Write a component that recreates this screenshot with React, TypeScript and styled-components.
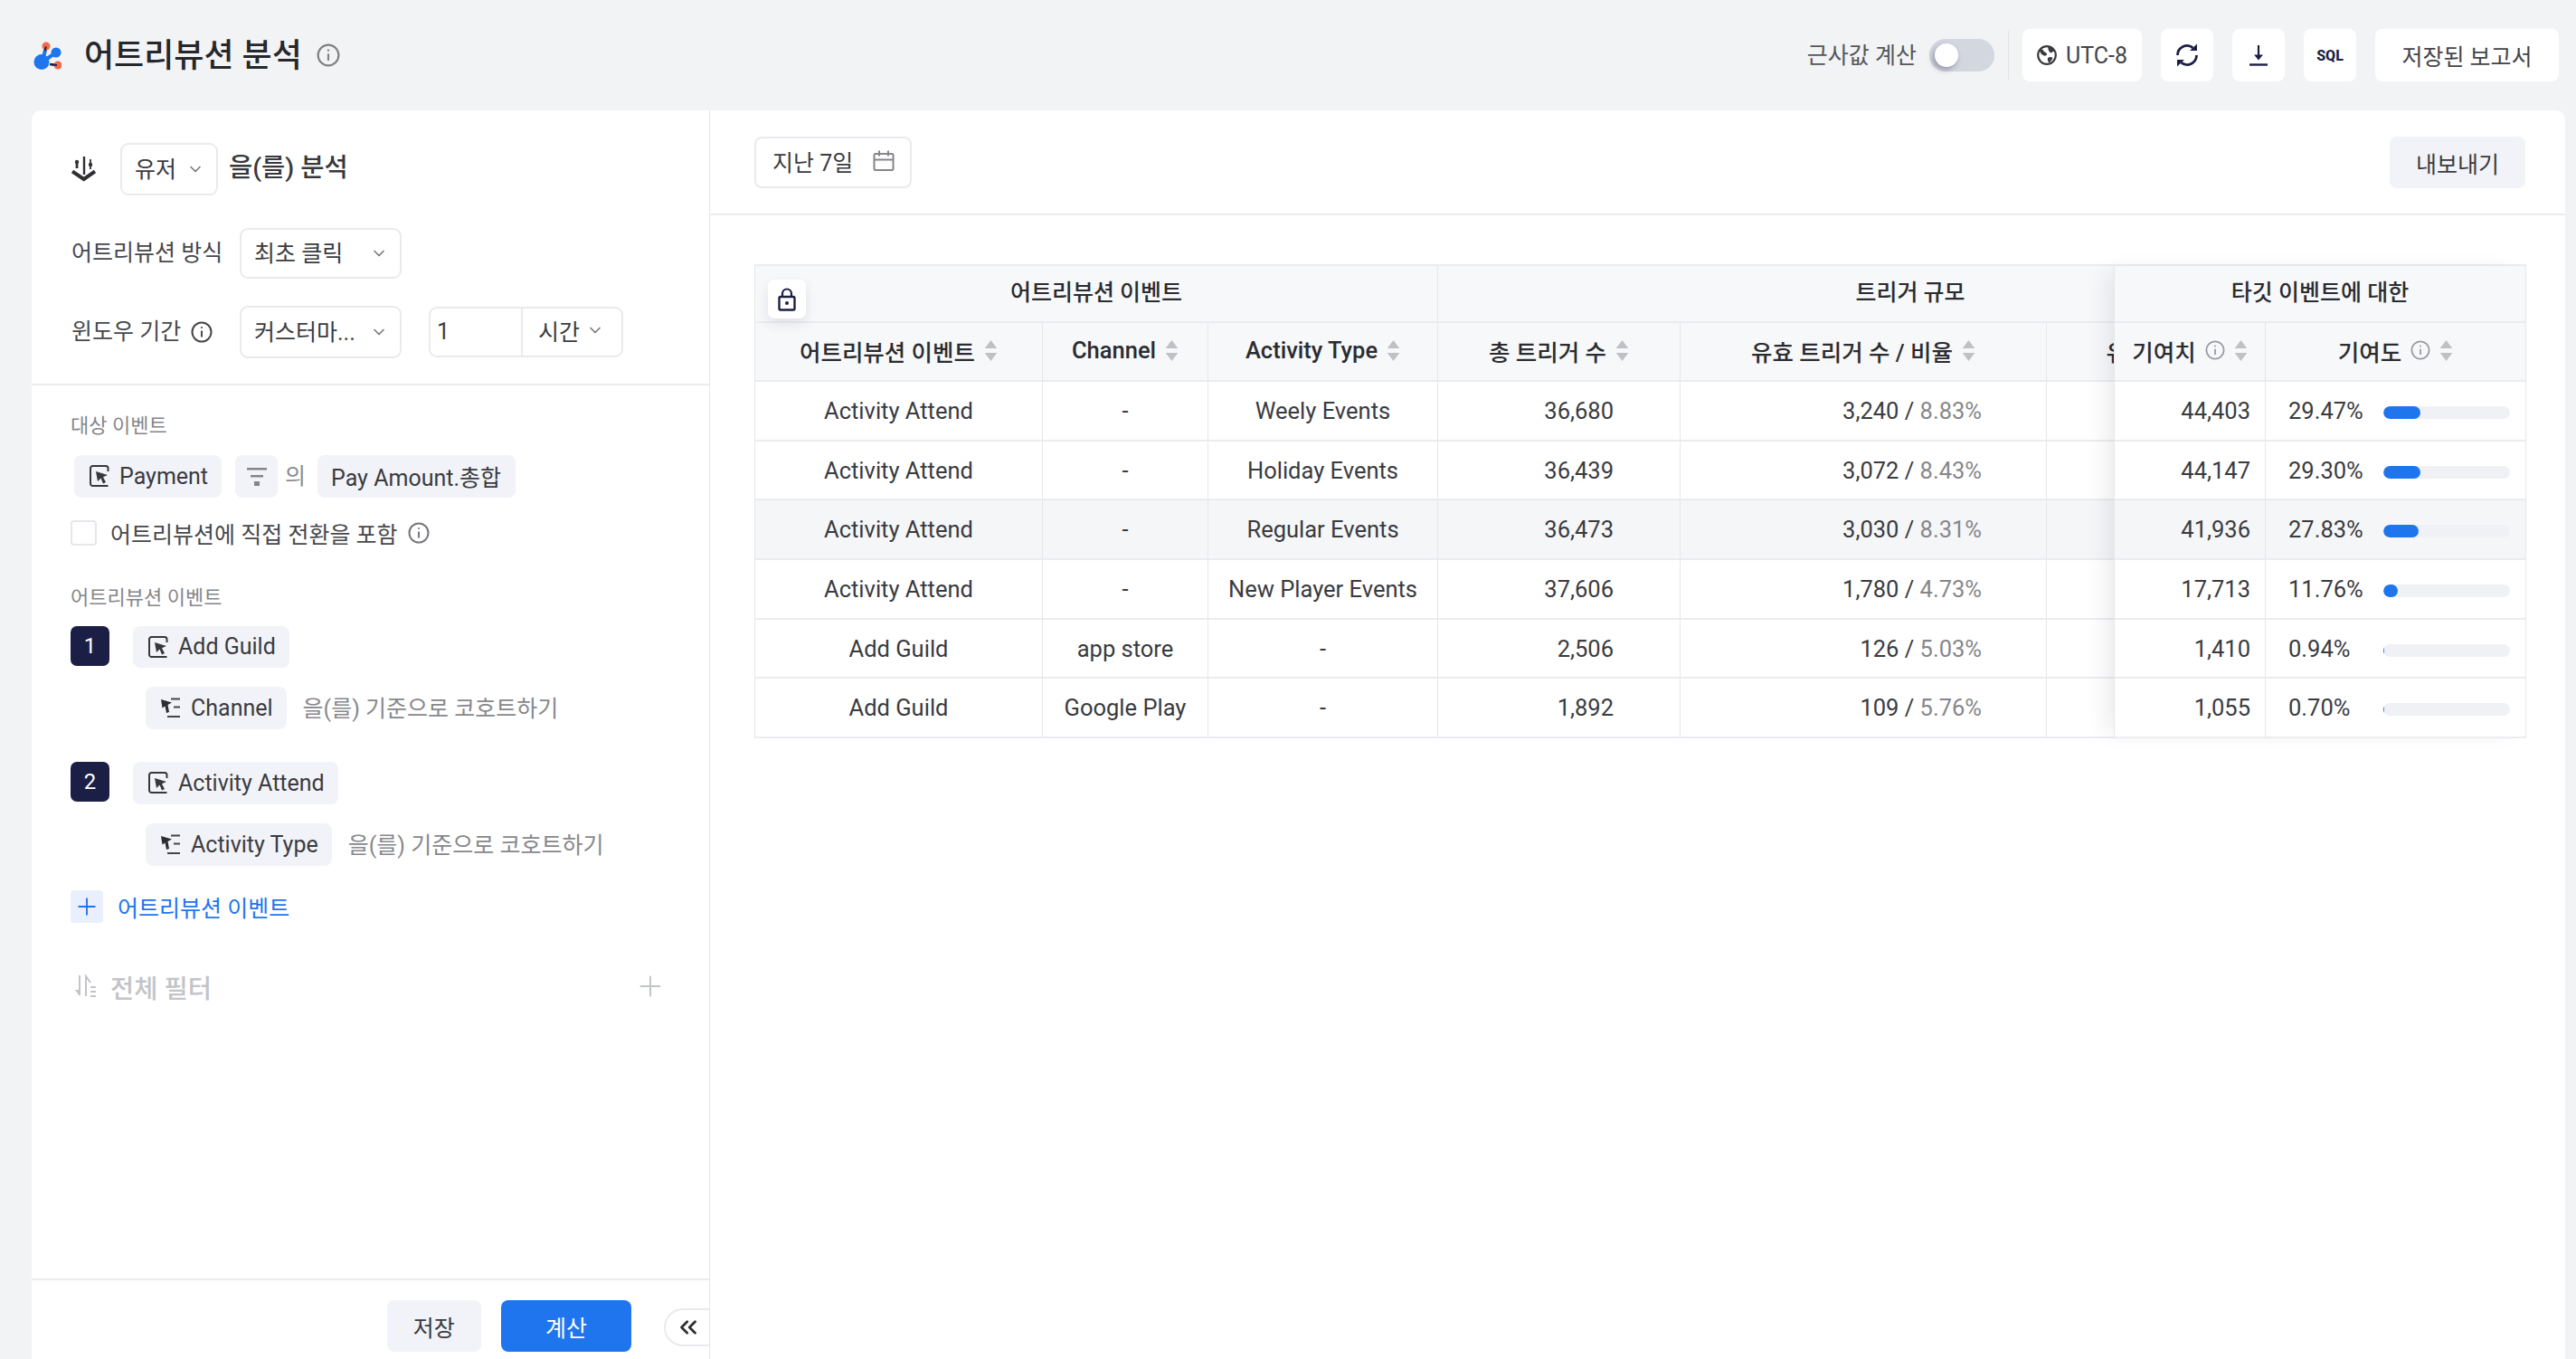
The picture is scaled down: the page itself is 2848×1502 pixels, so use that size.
import React from "react";
import styled, { createGlobalStyle } from "styled-components";
import { ChevronDown, ChevronsLeft, Plus } from "lucide-react";

const GlobalStyle = createGlobalStyle`
  html, body { margin: 0; padding: 0; background: #f2f3f5; }
  body { font-family: Roboto, "Noto Sans CJK KR", sans-serif; color: #2f3033; }
  * { box-sizing: border-box; }
`;

const Page = styled.div`
  width: 2848px;
  height: 1502px;
  display: flex;
  flex-direction: column;
  overflow: hidden;
  background: #f2f3f5;
`;

const TopBar = styled.header`
  height: 122px;
  flex: none;
  display: flex;
  align-items: center;
  padding: 0 19px 0 37px;
`;

const Title = styled.h1`
  margin: 2px 0 0 25px;
  font-size: 36px;
  line-height: 48px;
  font-weight: 500;
  color: #26272b;
`;

const TitleInfo = styled.span`
  display: flex;
  margin-left: 16px;
  color: #808184;
`;

const TopActions = styled.div`
  margin-left: auto;
  display: flex;
  align-items: center;
  gap: 21px;
`;

const ApproxLabel = styled.span`
  font-size: 25px;
  color: #55565a;
  position: relative;
  top: -2px;
`;

const Toggle = styled.div`
  width: 72px;
  height: 36px;
  border-radius: 18px;
  background: #d3d7e0;
  margin-left: -7px;
  position: relative;
`;

const ToggleKnob = styled.span`
  position: absolute;
  left: 6px;
  top: 5px;
  width: 26px;
  height: 26px;
  border-radius: 50%;
  background: #fff;
  box-shadow: -2px 3px 6px rgba(30, 32, 60, 0.35);
`;

const VLine = styled.span`
  width: 1px;
  height: 54px;
  background: #e1e2e6;
  margin: 0 -6px 0 -6px;
`;

const TopButton = styled.button<{ $w: number }>`
  width: ${(p) => p.$w}px;
  height: 58px;
  border: 0;
  border-radius: 8px;
  background: #fff;
  display: flex;
  align-items: center;
  justify-content: center;
  gap: 10px;
  padding: 0;
  font: inherit;
  font-size: 25px;
  color: #44454a;
`;

const SqlText = styled.span`
  font-size: 16px;
  font-weight: 800;
  color: #1c1f45;
`;

const Body = styled.main`
  flex: 1;
  display: flex;
  padding: 0 12px 0 35px;
  min-height: 0;
`;

const SidePanel = styled.aside`
  width: 750px;
  flex: none;
  background: #fff;
  border-right: 1px solid #e6e7eb;
  border-top-left-radius: 10px;
  display: flex;
  flex-direction: column;
`;

const SideTop = styled.section`
  padding: 36px 43px 28px 44px;
  border-bottom: 2px solid #ebecef;
`;

const AnalyzeRow = styled.div`
  display: flex;
  align-items: center;
  height: 58px;
`;

const AnalyzeText = styled.span`
  margin-left: 12px;
  font-size: 28.5px;
  font-weight: 500;
  color: #37383c;
  position: relative;
  top: -5px;
`;

const SettingRow = styled.div<{ $mt: number }>`
  display: flex;
  align-items: center;
  margin-top: ${(p) => p.$mt}px;
`;

const SettingLabel = styled.span`
  width: 186px;
  flex: none;
  display: flex;
  align-items: center;
  gap: 11px;
  font-size: 25px;
  line-height: 34px;
  color: #47484c;
`;

const Select = styled.div<{ $w: number; $h?: number }>`
  width: ${(p) => p.$w}px;
  height: ${(p) => p.$h ?? 58}px;
  flex: none;
  display: flex;
  align-items: center;
  justify-content: space-between;
  padding: 0 13px 5px 14px;
  border: 2px solid #e9eaee;
  border-radius: 9px;
  background: #fff;
  font-size: 25px;
  color: #3b3c40;
  white-space: nowrap;
  svg { color: #77787c; flex: none; position: relative; top: 2px; }
`;

const NumberGroup = styled.div`
  margin-left: 30px;
  width: 215px;
  height: 56px;
  display: flex;
  border: 2px solid #e9eaee;
  border-radius: 9px;
  font-size: 25px;
  color: #3b3c40;
`;

const NumberValue = styled.span`
  width: 102px;
  display: flex;
  align-items: center;
  padding: 0 0 2px 7px;
  border-right: 2px solid #e9eaee;
`;

const NumberUnit = styled.span`
  flex: 1;
  display: flex;
  align-items: center;
  justify-content: space-between;
  padding: 0 19px 4px 17px;
  svg { color: #77787c; }
`;

const SideMiddle = styled.section`
  padding: 30px 43px 0 43px;
  flex: 1;
`;

const Caption = styled.div<{ $mt?: number }>`
  font-size: 22px;
  line-height: 30px;
  color: #85868a;
  margin-top: ${(p) => p.$mt ?? 0}px;
`;

const TargetRow = styled.div`
  display: flex;
  align-items: center;
  margin: 17px 0 0 4px;
`;

const Chip = styled.div<{ $h?: number; $ml?: number }>`
  height: ${(p) => p.$h ?? 47}px;
  display: inline-flex;
  align-items: center;
  gap: 11px;
  padding: 0 15px 1px 17px;
  flex: none;
  border-radius: 8px;
  background: #f2f3f8;
  font-size: 25px;
  color: #3a3b40;
  margin-left: ${(p) => p.$ml ?? 0}px;
`;

const FilterChip = styled(Chip)`
  width: 47px;
  padding: 0;
  justify-content: center;
`;

const MetricChip = styled(Chip)`
  padding: 0 16px 2px 15px;
`;

const OfText = styled.span`
  margin: -6px 13px 0 8px;
  font-size: 25px;
  color: #8a8b8f;
`;

const CheckRow = styled.label`
  display: flex;
  align-items: center;
  height: 28px;
  margin-top: 25px;
  font-size: 25px;
  color: #47484c;
`;

const CheckBox = styled.span`
  width: 29px;
  height: 28px;
  border: 2px solid #e6e7eb;
  border-radius: 4px;
  margin-right: 15px;
`;

const RowInfo = styled.span`
  display: flex;
  margin-left: 11px;
  color: #77787c;
`;

const StepRow = styled.div<{ $mt: number }>`
  display: flex;
  align-items: flex-start;
  gap: 26px;
  margin-top: ${(p) => p.$mt}px;
`;

const StepBadge = styled.span`
  width: 43px;
  height: 44px;
  display: flex;
  align-items: center;
  justify-content: center;
  background: #1c1f45;
  border-radius: 7px;
  color: #fff;
  font-size: 24px;
`;

const GroupRow = styled.div`
  display: flex;
  align-items: center;
  margin: 21px 0 0 83px;
`;

const CohortText = styled.span`
  margin-left: 18px;
  font-size: 25px;
  color: #87888c;
  position: relative;
  top: -2px;
`;

const AddRow = styled.div`
  display: flex;
  align-items: center;
  gap: 16px;
  height: 36px;
  margin-top: 27px;
  font-size: 25px;
  color: #1f75ee;
  position: relative;
`;

const AddBox = styled.span`
  width: 36px;
  height: 36px;
  display: flex;
  align-items: center;
  justify-content: center;
  border-radius: 4px;
  background: #e9effc;
`;

const GlobalFilter = styled.div`
  display: flex;
  align-items: center;
  margin: 50px 4px 0 4px;
  height: 40px;
  color: #c3c4c8;
  font-size: 28.5px;
  font-weight: 500;
  gap: 16px;
  svg:last-child { margin-left: auto; }
`;

const SideFooter = styled.footer`
  height: 89px;
  flex: none;
  border-top: 2px solid #ebecef;
  padding: 22px 0 0 393px;
  display: flex;
  align-items: flex-start;
`;

const FootButton = styled.button<{ $primary?: boolean; $w: number }>`
  width: ${(p) => p.$w}px;
  height: 57px;
  border: 0;
  border-radius: 8px;
  margin-right: 22px;
  padding: 0;
  font: inherit;
  font-size: 25px;
  color: ${(p) => (p.$primary ? "#fff" : "#3a3b40")};
  background: ${(p) => (p.$primary ? "#1f75ee" : "#f2f3f8")};
`;

const CollapseButton = styled.button`
  width: 50px;
  height: 42px;
  margin: 9px 0 0 14px;
  padding: 0 0 0 2px;
  border: 2px solid #e9eaee;
  border-right: 0;
  border-radius: 21px 0 0 21px;
  background: #fff;
  display: flex;
  align-items: center;
  justify-content: center;
  color: #2f3033;
`;

const MainPanel = styled.section`
  flex: 1;
  min-width: 0;
  background: #fff;
  border-top-right-radius: 10px;
`;

const MainTop = styled.div`
  height: 116px;
  padding: 29px 44px 0 49px;
  border-bottom: 2px solid #ebecef;
  display: flex;
  justify-content: space-between;
  align-items: flex-start;
`;

const DateBox = styled.div`
  width: 174px;
  height: 57px;
  border: 2px solid #e9eaee;
  border-radius: 8px;
  display: flex;
  align-items: center;
  justify-content: space-between;
  padding: 0 17px 3px 18px;
  font-size: 25px;
  color: #3b3c40;
`;

const ExportButton = styled.button`
  width: 150px;
  height: 57px;
  border: 0;
  border-radius: 8px;
  padding: 0;
  font: inherit;
  font-size: 25px;
  color: #3a3b40;
  background: #f2f3f8;
`;

const TableWrap = styled.div`
  margin: 54px 43px 0 49px;
  display: flex;
  border-left: 1px solid #e6e7eb;
  border-right: 1px solid #e6e7eb;
  border-top: 2px solid #ebecef;
`;

const ScrollPane = styled.div`
  width: 1502px;
  flex: none;
  overflow: hidden;
  position: relative;
`;

const FixedPane = styled.div`
  flex: 1;
  position: relative;
  z-index: 1;
  background: #fff;
  box-shadow: -14px 0 22px -6px rgba(40, 42, 70, 0.09);
  border-left: 1px solid #e6e7eb;
`;

const Table = styled.table<{ $w: number }>`
  width: ${(p) => p.$w}px;
  table-layout: fixed;
  border-collapse: separate;
  border-spacing: 0;
`;

const GroupTh = styled.th<{ $noLine?: boolean }>`
  height: 63px;
  padding: 0;
  background: #f7f8fa;
  font-size: 25px;
  font-weight: 500;
  color: #2b2c30;
  border-bottom: 2px solid #ebecef;
  border-right: ${(p) => (p.$noLine ? 0 : "1px solid #e6e7eb")};
  white-space: nowrap;
  position: relative;
`;

const GroupLabel = styled.span`
  position: relative;
  top: -4px;
`;

const HeadTh = styled.th<{ $noLine?: boolean; $pl?: number }>`
  height: 65px;
  padding: 0 0 3px ${(p) => p.$pl ?? 0}px;
  background: #f7f8fa;
  font-size: 25.5px;
  font-weight: 500;
  color: #2b2c30;
  border-bottom: 2px solid #ebecef;
  border-right: ${(p) => (p.$noLine ? 0 : "1px solid #e6e7eb")};
  white-space: nowrap;
  overflow: hidden;
`;

const HeadInner = styled.span`
  display: inline-flex;
  align-items: center;
  gap: 10px;
`;

const HeadInfo = styled.span`
  display: flex;
  color: #9a9b9f;
`;

const Td = styled.td<{ $align?: string; $pr?: number; $noLine?: boolean; $hover?: boolean }>`
  height: 65.7px;
  padding: 0 ${(p) => p.$pr ?? 0}px 0 0;
  font-size: 25.5px;
  color: #3a3b3f;
  text-align: ${(p) => p.$align ?? "center"};
  border-bottom: 2px solid #ebecef;
  border-right: ${(p) => (p.$noLine ? 0 : "1px solid #e6e7eb")};
  background: ${(p) => (p.$hover ? "#f5f6f8" : "#fff")};
  white-space: nowrap;
`;

const Rate = styled.span`
  color: #86878b;
`;

const ContribCell = styled.div`
  display: flex;
  align-items: center;
  padding-left: 25px;
`;

const ContribValue = styled.span`
  width: 105px;
  flex: none;
  text-align: left;
`;

const Bar = styled.span`
  width: 140px;
  height: 14px;
  border-radius: 7px;
  background: #f0f1f5;
  overflow: hidden;
  position: relative;
  top: 2px;
`;

const BarFill = styled.span`
  display: block;
  height: 100%;
  border-radius: 7px;
  background: #1f75ee;
`;

const LockButton = styled.span`
  position: absolute;
  left: 14px;
  top: 15px;
  width: 42px;
  height: 43px;
  display: flex;
  align-items: center;
  justify-content: center;
  background: #fff;
  border-radius: 7px;
  box-shadow: 0 6px 14px rgba(40, 42, 70, 0.1);
`;

const InfoIcon = ({ size = 24 }: { size?: number }) => (
  <svg width={size} height={size} viewBox="0 0 24 24" fill="none" stroke="currentColor" strokeWidth="2">
    <circle cx="12" cy="12" r="10.5" />
    <path d="M12 10.5v7" />
    <circle cx="12" cy="7" r="1.1" fill="currentColor" stroke="none" />
  </svg>
);

const Logo = () => (
  <svg width="31" height="31" viewBox="0 0 31 31" fill="none">
    <path d="M9 23L25 12" stroke="#1f75ee" strokeWidth="4" />
    <path d="M10 22L14 5" stroke="#1f75ee" strokeWidth="4" />
    <path d="M12.8 10L14 5M18 25L27 26" stroke="#1c1f45" strokeWidth="2.4" />
    <circle cx="9" cy="22.5" r="8.5" fill="#1f75ee" />
    <circle cx="25" cy="12" r="5.5" fill="#1f75ee" />
    <circle cx="14" cy="5" r="4.5" fill="#f4694a" />
    <circle cx="27" cy="26" r="4.5" fill="#f4694a" />
    <path d="M12.9 9.5l.9-4M20 25.3l6 .7" stroke="#1c1f45" strokeWidth="2" />
  </svg>
);

const AnchorIcon = () => (
  <svg width="27" height="28" viewBox="0 0 27 28" fill="none" style={{ marginRight: 27 }}>
    <path d="M14 0v20" stroke="#2f3033" strokeWidth="2.4" />
    <circle cx="6" cy="6" r="2.2" fill="#2f3033" />
    <path d="M6 6v7" stroke="#2f3033" strokeWidth="2.8" />
    <circle cx="21" cy="9" r="2.2" fill="#2f3033" />
    <path d="M21 3v11" stroke="#2f3033" strokeWidth="1.8" />
    <path d="M1 16.5l12.7 8.5L26 16.5" stroke="#2f3033" strokeWidth="4" />
  </svg>
);

const EventIcon = () => (
  <svg width="22" height="24" viewBox="0 0 22 24" fill="none">
    <path d="M20.5 7V3.500A2.500 2.500 0 0 0 18 1H3.500A2.500 2.500 0 0 0 1 3.500v17A2.500 2.500 0 0 0 3.500 23H20.500" stroke="#37383c" strokeWidth="2" />
    <path d="M7 7l13 4-5 2.200 3 5.800-3 1.400-2.500-5.900-3.500 3.500z" fill="#37383c" />
  </svg>
);

const GroupIcon = () => (
  <svg width="22" height="24" viewBox="0 0 22 24" fill="none">
    <path d="M0 3l12 3.500-4.500 2.500 1.500 8-3 1-1.500-7.500-3 2z" fill="#2c2d31" />
    <path d="M11 2.500h10M14 11.500h7M7 22h14" stroke="#44454a" strokeWidth="2" />
  </svg>
);

const FunnelIcon = () => (
  <svg width="22" height="20" viewBox="0 0 22 20">
    <path d="M0 0h22v2.500H0zM4 8h14v2.500H4zM8 15h6v5H8z" fill="#85868a" />
  </svg>
);

const SortIcon = () => (
  <svg width="15" height="23" viewBox="0 0 14 22">
    <path d="M7 0l6.500 8.500H.5zM7 22L.5 13.500h13z" fill="#c0c1c5" />
  </svg>
);

const CalendarIcon = () => (
  <svg width="24" height="24" viewBox="0 0 24 24" fill="none" stroke="#85868a" strokeWidth="2">
    <rect x="1.500" y="4" width="21" height="18" rx="1.500" />
    <path d="M1.500 10.500h21M7 .5v6M17 .5v6" />
  </svg>
);

const LockIcon = () => (
  <svg width="20" height="26" viewBox="0 0 20 26" fill="none">
    <path d="M5 10V6.500a5 5 0 0 1 10 0V10" stroke="#1c1f45" strokeWidth="2.200" />
    <rect x="1.500" y="10" width="17" height="14.500" rx="1.500" stroke="#1c1f45" strokeWidth="2.400" />
    <circle cx="10" cy="17" r="2" fill="#1c1f45" />
  </svg>
);

const GlobeIcon = () => (
  <svg width="22" height="22" viewBox="0 0 22 22" fill="none">
    <circle cx="11" cy="11" r="9.800" stroke="#3a3b3f" strokeWidth="2.200" />
    <path d="M3 5c3-1 4 0 4.500 1.500 .5 1.500 3 1 3.500 3 .4 1.600-1.500 2.500-3 2-2-.6-4.500-2-5-6.500zM12 1.500c3 0 6 2 7.500 4.500l-4 2.500c-2-.5-3-3-3.500-7zM12 14c2-1.500 4.500-1.500 5.500.5l-3.500 5c-2-1-2.500-3.500-2-5.500z" fill="#3a3b3f" />
  </svg>
);

const RefreshIcon = () => (
  <svg width="26" height="28" viewBox="0 0 26 28" fill="none">
    <path d="M2.500 14a10.500 10.500 0 0 1 17-8.200M23.500 14a10.500 10.500 0 0 1-17 8.200" stroke="#1c1f45" strokeWidth="2.800" />
    <path d="M16 9h8V1.500zM10 19H2v7.500z" fill="#1c1f45" />
  </svg>
);

const DownloadIcon = () => (
  <svg width="22" height="24" viewBox="0 0 22 24" fill="none">
    <path d="M11 1v15" stroke="#1c1f45" strokeWidth="2.200" />
    <path d="M6 11.500l5 6 5-6z" fill="#1c1f45" />
    <path d="M1 22.500h20" stroke="#1c1f45" strokeWidth="2.400" />
  </svg>
);

const SortFilterIcon = () => (
  <svg width="24" height="26" viewBox="0 0 24 26" fill="none">
    <path d="M6 1v22" stroke="#c3c4c8" strokeWidth="2" />
    <path d="M1 17l5 7v-7z" fill="#c3c4c8" />
    <path d="M13 24V2l5 7" stroke="#c3c4c8" strokeWidth="2" />
    <path d="M18 14h6M18 19h6M18 24h6" stroke="#c3c4c8" strokeWidth="2" />
  </svg>
);

const Head = ({ label, info }: { label: string; info?: boolean }) => (
  <HeadInner>
    {label}
    {info && (
      <HeadInfo>
        <InfoIcon size={22} />
      </HeadInfo>
    )}
    <SortIcon />
  </HeadInner>
);

const rows = [
  ["Activity Attend", "-", "Weely Events", "36,680", "3,240", "8.83%", "44,403", 29.47],
  ["Activity Attend", "-", "Holiday Events", "36,439", "3,072", "8.43%", "44,147", 29.3],
  ["Activity Attend", "-", "Regular Events", "36,473", "3,030", "8.31%", "41,936", 27.83],
  ["Activity Attend", "-", "New Player Events", "37,606", "1,780", "4.73%", "17,713", 11.76],
  ["Add Guild", "app store", "-", "2,506", "126", "5.03%", "1,410", 0.94],
  ["Add Guild", "Google Play", "-", "1,892", "109", "5.76%", "1,055", 0.7],
] as const;

export default function App() {
  return (
    <Page>
      <GlobalStyle />
      <TopBar>
        <Logo />
        <Title>어트리뷰션 분석</Title>
        <TitleInfo>
          <InfoIcon size={26} />
        </TitleInfo>
        <TopActions>
          <ApproxLabel>근사값 계산</ApproxLabel>
          <Toggle>
            <ToggleKnob />
          </Toggle>
          <VLine />
          <TopButton $w={132}>
            <GlobeIcon />
            UTC-8
          </TopButton>
          <TopButton $w={58}>
            <RefreshIcon />
          </TopButton>
          <TopButton $w={58}>
            <DownloadIcon />
          </TopButton>
          <TopButton $w={58}>
            <SqlText>SQL</SqlText>
          </TopButton>
          <TopButton $w={203}>저장된 보고서</TopButton>
        </TopActions>
      </TopBar>
      <Body>
        <SidePanel>
          <SideTop>
            <AnalyzeRow>
              <AnchorIcon />
              <Select $w={108}>
                유저
                <ChevronDown size={20} />
              </Select>
              <AnalyzeText>을(를) 분석</AnalyzeText>
            </AnalyzeRow>
            <SettingRow $mt={36}>
              <SettingLabel>어트리뷰션 방식</SettingLabel>
              <Select $w={179} $h={56}>
                최초 클릭
                <ChevronDown size={20} />
              </Select>
            </SettingRow>
            <SettingRow $mt={30}>
              <SettingLabel>
                윈도우 기간
                <InfoIcon />
              </SettingLabel>
              <Select $w={179}>
                커스터마...
                <ChevronDown size={20} />
              </Select>
              <NumberGroup>
                <NumberValue>1</NumberValue>
                <NumberUnit>
                  시간
                  <ChevronDown size={20} />
                </NumberUnit>
              </NumberGroup>
            </SettingRow>
          </SideTop>
          <SideMiddle>
            <Caption>대상 이벤트</Caption>
            <TargetRow>
              <Chip>
                <EventIcon />
                Payment
              </Chip>
              <FilterChip $ml={15}>
                <FunnelIcon />
              </FilterChip>
              <OfText>의</OfText>
              <MetricChip>Pay Amount.총합</MetricChip>
            </TargetRow>
            <CheckRow>
              <CheckBox />
              어트리뷰션에 직접 전환을 포함
              <RowInfo>
                <InfoIcon />
              </RowInfo>
            </CheckRow>
            <Caption $mt={43}>어트리뷰션 이벤트</Caption>
            <StepRow $mt={16}>
              <StepBadge>1</StepBadge>
              <Chip $h={46}>
                <EventIcon />
                Add Guild
              </Chip>
            </StepRow>
            <GroupRow>
              <Chip>
                <GroupIcon />
                Channel
              </Chip>
              <CohortText>을(를) 기준으로 코호트하기</CohortText>
            </GroupRow>
            <StepRow $mt={36}>
              <StepBadge>2</StepBadge>
              <Chip>
                <EventIcon />
                Activity Attend
              </Chip>
            </StepRow>
            <GroupRow>
              <Chip>
                <GroupIcon />
                Activity Type
              </Chip>
              <CohortText>을(를) 기준으로 코호트하기</CohortText>
            </GroupRow>
            <AddRow>
              <AddBox>
                <Plus size={30} strokeWidth={1.5} />
              </AddBox>
              어트리뷰션 이벤트
            </AddRow>
            <GlobalFilter>
              <SortFilterIcon />
              전체 필터
              <Plus size={36} strokeWidth={1.3} />
            </GlobalFilter>
          </SideMiddle>
          <SideFooter>
            <FootButton $w={104}>저장</FootButton>
            <FootButton $w={145} $primary>
              계산
            </FootButton>
            <CollapseButton>
              <ChevronsLeft size={30} strokeWidth={2.2} />
            </CollapseButton>
          </SideFooter>
        </SidePanel>
        <MainPanel>
          <MainTop>
            <DateBox>
              지난 7일
              <CalendarIcon />
            </DateBox>
            <ExportButton>내보내기</ExportButton>
          </MainTop>
          <TableWrap>
            <ScrollPane>
              <Table $w={1799}>
                <colgroup>
                  <col width={318} />
                  <col width={183} />
                  <col width={254} />
                  <col width={268} />
                  <col width={405} />
                  <col width={371} />
                </colgroup>
                <thead>
                  <tr>
                    <GroupTh colSpan={3}>
                      <LockButton>
                        <LockIcon />
                      </LockButton>
                      <GroupLabel>어트리뷰션 이벤트</GroupLabel>
                    </GroupTh>
                    <GroupTh colSpan={3} $noLine>
                      <GroupLabel>트리거 규모</GroupLabel>
                    </GroupTh>
                  </tr>
                  <tr>
                    <HeadTh><Head label="어트리뷰션 이벤트" /></HeadTh>
                    <HeadTh><Head label="Channel" /></HeadTh>
                    <HeadTh><Head label="Activity Type" /></HeadTh>
                    <HeadTh><Head label="총 트리거 수" /></HeadTh>
                    <HeadTh><Head label="유효 트리거 수 / 비율" /></HeadTh>
                    <HeadTh $noLine $pl={15}><Head label="유효 트리거 사용자 수" /></HeadTh>
                  </tr>
                </thead>
                <tbody>
                  {rows.map((r, i) => (
                    <tr key={i}>
                      <Td $hover={i === 2}>{r[0]}</Td>
                      <Td $hover={i === 2}>{r[1]}</Td>
                      <Td $hover={i === 2}>{r[2]}</Td>
                      <Td $hover={i === 2} $align="right" $pr={73}>{r[3]}</Td>
                      <Td $hover={i === 2} $align="right" $pr={71}>
                        {r[4]} / <Rate>{r[5]}</Rate>
                      </Td>
                      <Td $hover={i === 2} $noLine />
                    </tr>
                  ))}
                </tbody>
              </Table>
            </ScrollPane>
            <FixedPane>
              <Table $w={454}>
                <colgroup>
                  <col width={167} />
                  <col width={287} />
                </colgroup>
                <thead>
                  <tr>
                    <GroupTh colSpan={2} $noLine>
                      <GroupLabel>타깃 이벤트에 대한</GroupLabel>
                    </GroupTh>
                  </tr>
                  <tr>
                    <HeadTh><Head label="기여치" info /></HeadTh>
                    <HeadTh $noLine><Head label="기여도" info /></HeadTh>
                  </tr>
                </thead>
                <tbody>
                  {rows.map((r, i) => (
                    <tr key={i}>
                      <Td $hover={i === 2} $align="right" $pr={16}>{r[6]}</Td>
                      <Td $hover={i === 2} $noLine>
                        <ContribCell>
                          <ContribValue>{r[7].toFixed(2)}%</ContribValue>
                          <Bar>
                            <BarFill style={{ width: `${r[7]}%` }} />
                          </Bar>
                        </ContribCell>
                      </Td>
                    </tr>
                  ))}
                </tbody>
              </Table>
            </FixedPane>
          </TableWrap>
        </MainPanel>
      </Body>
    </Page>
  );
}
